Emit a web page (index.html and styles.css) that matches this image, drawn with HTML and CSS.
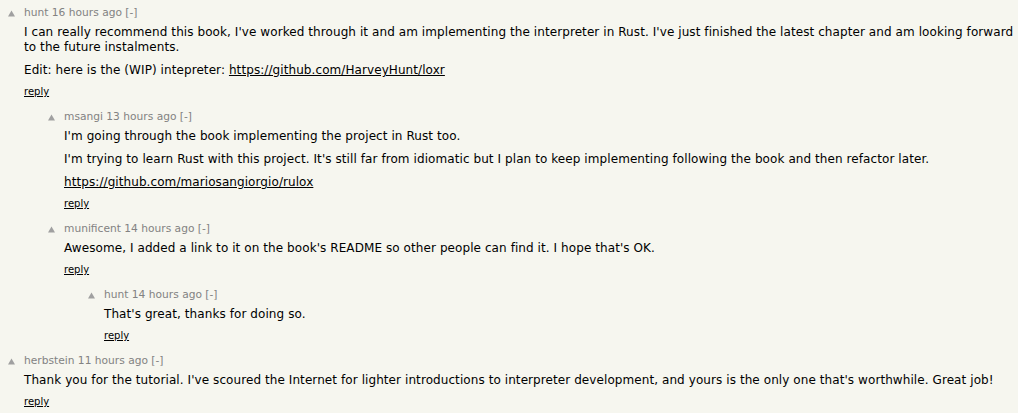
FILE: index.html
```html
<!DOCTYPE html>
<html>
<head>
<meta charset="utf-8">
<link rel="stylesheet" href="styles.css">
</head>
<body>
<div class="thread">
  <div class="comment">
    <div class="vote"><svg class="arrow" viewBox="0 0 10 10" width="10" height="10"><polygon points="1,7.5 4.5,1.5 8,7.5"/></svg></div>
    <div class="body">
      <div class="comhead"><a class="user">hunt</a> <a class="age">16 hours ago</a> <a class="toggle">[-]</a></div>
      <div class="text">
        <p>I can really recommend this book, I've worked through it and am implementing the interpreter in Rust. I've just finished the latest chapter and am looking forward to the future instalments.</p>
        <p>Edit: here is the (WIP) intepreter: <a class="link">https://github.com/HarveyHunt/loxr</a></p>
      </div>
      <div class="reply"><a>reply</a></div>
    </div>
  </div>

  <div class="comment ind1">
    <div class="vote"><svg class="arrow" viewBox="0 0 10 10" width="10" height="10"><polygon points="1,7.5 4.5,1.5 8,7.5"/></svg></div>
    <div class="body">
      <div class="comhead"><a class="user">msangi</a> <a class="age">13 hours ago</a> <a class="toggle">[-]</a></div>
      <div class="text">
        <p>I'm going through the book implementing the project in Rust too.</p>
        <p>I'm trying to learn Rust with this project. It's still far from idiomatic but I plan to keep implementing following the book and then refactor later.</p>
        <p><a class="link">https://github.com/mariosangiorgio/rulox</a></p>
      </div>
      <div class="reply"><a>reply</a></div>
    </div>
  </div>

  <div class="comment ind1">
    <div class="vote"><svg class="arrow" viewBox="0 0 10 10" width="10" height="10"><polygon points="1,7.5 4.5,1.5 8,7.5"/></svg></div>
    <div class="body">
      <div class="comhead"><a class="user">munificent</a> <a class="age">14 hours ago</a> <a class="toggle">[-]</a></div>
      <div class="text">
        <p>Awesome, I added a link to it on the book's README so other people can find it. I hope that's OK.</p>
      </div>
      <div class="reply"><a>reply</a></div>
    </div>
  </div>

  <div class="comment ind2">
    <div class="vote"><svg class="arrow" viewBox="0 0 10 10" width="10" height="10"><polygon points="1,7.5 4.5,1.5 8,7.5"/></svg></div>
    <div class="body">
      <div class="comhead"><a class="user">hunt</a> <a class="age">14 hours ago</a> <a class="toggle">[-]</a></div>
      <div class="text">
        <p>That's great, thanks for doing so.</p>
      </div>
      <div class="reply"><a>reply</a></div>
    </div>
  </div>

  <div class="comment">
    <div class="vote"><svg class="arrow" viewBox="0 0 10 10" width="10" height="10"><polygon points="1,7.5 4.5,1.5 8,7.5"/></svg></div>
    <div class="body">
      <div class="comhead"><a class="user">herbstein</a> <a class="age">11 hours ago</a> <a class="toggle">[-]</a></div>
      <div class="text">
        <p>Thank you for the tutorial. I've scoured the Internet for lighter introductions to interpreter development, and yours is the only one that's worthwhile. Great job!</p>
      </div>
      <div class="reply"><a>reply</a></div>
    </div>
  </div>
</div>
</body>
</html>
```

FILE: styles.css
```css
html, body {
  margin: 0;
  padding: 0;
  background: #f6f6ef;
}

body {
  font-family: "DejaVu Sans", Verdana, sans-serif;
  color: #000;
}

.thread {
  padding-top: 6px;
  display: flex;
  flex-direction: column;
}

.comment {
  display: flex;
  margin-bottom: 12px;
}

.comment.ind1 {
  padding-left: 40px;
}

.comment.ind2 {
  padding-left: 80px;
}

.vote {
  width: 24px;
  flex: none;
  padding-left: 7px;
  box-sizing: border-box;
}

.arrow {
  display: block;
  margin-top: 3px;
  fill: #a0a0a0;
}

.body {
  flex: 1;
  min-width: 0;
}

.comhead {
  font-size: 10.67px;
  line-height: 13px;
  color: #828282;
}

.comhead a {
  color: #828282;
  text-decoration: none;
}

.text {
  font-size: 12px;
  line-height: 15px;
  margin-top: 6px;
  letter-spacing: 0.08px;
}

.text p {
  margin: 8px 0 0 0;
}

.text p:first-child {
  margin-top: 0;
}

.link {
  color: #000;
  text-decoration: underline;
}

.reply {
  margin-top: 8px;
  font-size: 10px;
  line-height: 12px;
}

.reply a {
  color: #000;
  text-decoration: underline;
}
```
